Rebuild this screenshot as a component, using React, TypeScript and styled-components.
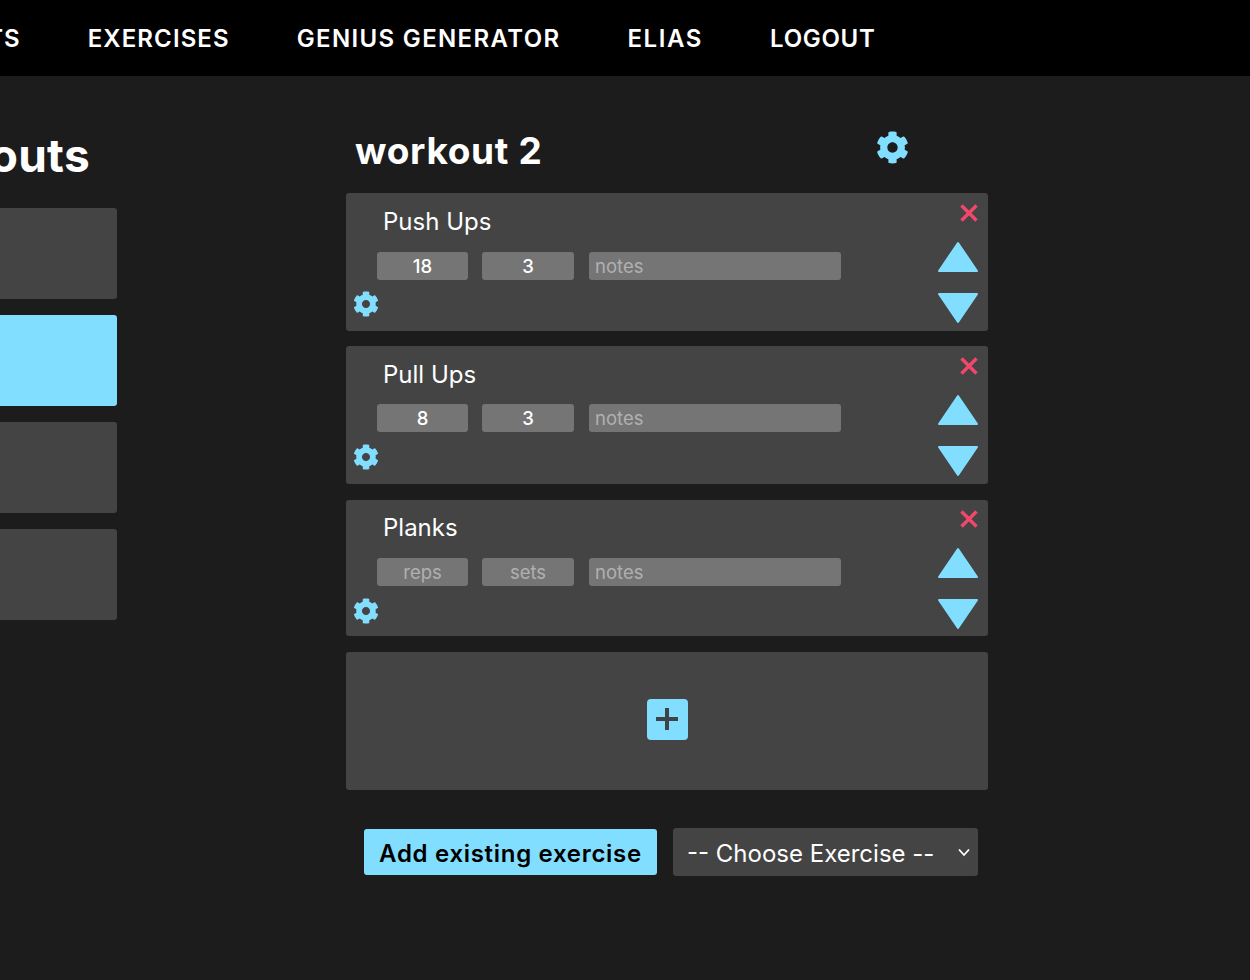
import { createGlobalStyle, styled } from "styled-components";
import { FaCog } from "react-icons/fa";

const FONT = `Inter, "Noto Sans", "Liberation Sans", sans-serif`;
const BLUE = "#82deff";

const links = [
    { label: "WORKOUTS", tracking: 1 },
    { label: "EXERCISES", tracking: 1.1 },
    { label: "GENIUS GENERATOR", tracking: 1.35 },
    { label: "ELIAS", tracking: 1.6 },
    { label: "LOGOUT", tracking: 0.7 },
];

const exercises = [
    { name: "Push Ups", reps: "18", sets: "3" },
    { name: "Pull Ups", reps: "8", sets: "3" },
    { name: "Planks", reps: "", sets: "" },
];

export default function App() {
    return (
        <>
            <GlobalStyle />
            <Nav>
                {links.map(link => (
                    <NavLink key={link.label} tracking={link.tracking}>{link.label}</NavLink>
                ))}
            </Nav>
            <Main>
                <WorkoutList>
                    <PageTitle>Workouts</PageTitle>
                    <WorkoutTile />
                    <WorkoutTile active />
                    <WorkoutTile />
                    <WorkoutTile />
                </WorkoutList>
                <Detail>
                    <DetailHead>
                        <DetailTitle>workout 2</DetailTitle>
                        <HeadGear><FaCog /></HeadGear>
                    </DetailHead>
                    <Cards>
                        {exercises.map(item => (
                            <Card key={item.name}>
                                <CardBody>
                                    <ExerciseName>{item.name}</ExerciseName>
                                    <Inputs>
                                        <SmallInput placeholder="reps" defaultValue={item.reps} />
                                        <SmallInput placeholder="sets" defaultValue={item.sets} />
                                        <NotesInput placeholder="notes" />
                                    </Inputs>
                                    <CardGear><FaCog /></CardGear>
                                </CardBody>
                                <CardControls>
                                    <DeleteIcon viewBox="0 0 18 18">
                                        <path d="M1.5 1.5 L16.5 16.5 M16.5 1.5 L1.5 16.5" />
                                    </DeleteIcon>
                                    <ArrowIcon viewBox="0 0 40 32">
                                        <path d="M20 2 L39 30 H1 Z" />
                                    </ArrowIcon>
                                    <ArrowIcon viewBox="0 0 40 32">
                                        <path d="M1 2 H39 L20 30 Z" />
                                    </ArrowIcon>
                                </CardControls>
                            </Card>
                        ))}
                        <AddCard>
                            <PlusButton>
                                <svg viewBox="0 0 24 24" width="24" height="24">
                                    <path d="M12 1 V23 M1 12 H23" stroke="#3d4347" strokeWidth="4" />
                                </svg>
                            </PlusButton>
                        </AddCard>
                    </Cards>
                    <AddRow>
                        <AddButton>Add existing exercise</AddButton>
                        <SelectWrap>
                            <ExerciseSelect>
                                <option>-- Choose Exercise --</option>
                            </ExerciseSelect>
                            <SelectChevron viewBox="0 0 12 9">
                                <path d="M1 1.5 L6 7 L11 1.5" />
                            </SelectChevron>
                        </SelectWrap>
                    </AddRow>
                </Detail>
            </Main>
        </>
    );
}

const GlobalStyle = createGlobalStyle`
    html, body {
        margin: 0;
        width: 1250px;
        height: 980px;
        overflow: hidden;
        background: #1c1c1c;
        font-family: ${FONT};
        color: #fff;
    }
    * { box-sizing: border-box; }
`;
const Nav = styled.nav`
    height: 76px;
    background: #000;
    display: flex;
    align-items: center;
    gap: 67px;
    margin-left: -129px;
    width: 1379px;
    padding-top: 1px;
`;
const NavLink = styled.a<{ tracking: number }>`
    font-size: 24px;
    font-weight: 600;
    letter-spacing: ${({ tracking }) => tracking}px;
    white-space: nowrap;
`;
const Main = styled.main`
    display: flex;
    margin-left: -213px;
`;
const WorkoutList = styled.section`
    width: 330px;
    margin-right: 229px;
    padding-top: 45px;
    display: flex;
    flex-direction: column;
    gap: 15.5px;
`;
const PageTitle = styled.h1`
    margin: 0 0 3px;
    height: 68px;
    font-size: 46px;
    line-height: 68px;
    font-weight: 700;
    letter-spacing: 0.3px;
    text-align: right;
    padding-right: 27px;
`;
const WorkoutTile = styled.div<{ active?: boolean }>`
    height: 91.5px;
    border-radius: 3px;
    background: ${({ active }) => (active ? BLUE : "#444")};
`;
const Detail = styled.section`
    width: 642px;
`;
const DetailHead = styled.div`
    height: 117px;
    display: flex;
    align-items: center;
    padding: 31px 0 0 9px;
`;
const DetailTitle = styled.h2`
    margin: 0;
    width: 521px;
    font-size: 37px;
    font-weight: 700;
    letter-spacing: 0.7px;
`;
const HeadGear = styled.span`
    font-size: 33px;
    color: ${BLUE};
    display: flex;
    margin-bottom: 6px;
`;
const Cards = styled.div`
    display: flex;
    flex-direction: column;
    gap: 16px;
`;
const Card = styled.article`
    height: 138px;
    background: #444;
    border-radius: 3px;
    display: flex;
    justify-content: space-between;
    padding: 11px 10px 0 7px;
    &:first-child { margin-bottom: -1px; }
    &:nth-child(3) { height: 136px; padding-top: 10px; }
`;
const CardBody = styled.div`
    display: flex;
    flex-direction: column;
`;
const ExerciseName = styled.h3`
    margin: 3px 0 0 30px;
    height: 30px;
    font-size: 24px;
    line-height: 30px;
    font-weight: 400;
`;
const Inputs = styled.div`
    display: flex;
    gap: 14px;
    margin: 14px 0 0 24px;
    ${Card}:nth-child(odd) & { margin-top: 15px; }
`;
const SmallInput = styled.input`
    width: 92px;
    height: 28px;
    border: 0;
    border-radius: 3px;
    background: #757575;
    color: #fff;
    font-family: ${FONT};
    font-size: 18.5px;
    font-weight: 500;
    text-align: center;
    padding: 0;
    &:first-child { width: 91px; }
    &::placeholder { color: #b0b0b0; font-weight: 400; }
`;
const NotesInput = styled(SmallInput)`
    width: 252px;
    margin-left: 1px;
    text-align: left;
    padding-left: 6px;
`;
const CardGear = styled.span`
    font-size: 26px;
    color: ${BLUE};
    display: flex;
    margin-top: 12px;
    ${Card}:first-child & { margin-top: 11px; }
`;
const CardControls = styled.div`
    display: flex;
    flex-direction: column;
    align-items: flex-end;
`;
const DeleteIcon = styled.svg`
    flex-shrink: 0;
    width: 18px;
    height: 18px;
    fill: none;
    stroke: #f0476b;
    stroke-width: 3.5;
    margin-bottom: 19px;
`;
const ArrowIcon = styled.svg`
    flex-shrink: 0;
    width: 40px;
    height: 32px;
    fill: ${BLUE};
    stroke: ${BLUE};
    stroke-width: 2;
    stroke-linejoin: round;
    margin-bottom: 19px;
`;
const AddCard = styled.div`
    height: 138px;
    background: #444;
    border-radius: 3px;
    display: flex;
    align-items: center;
    justify-content: center;
`;
const PlusButton = styled.button`
    width: 41px;
    height: 41px;
    border: 0;
    border-radius: 4px;
    background: ${BLUE};
    display: flex;
    align-items: center;
    justify-content: center;
    padding: 0;
    margin-bottom: 4px;
`;
const AddRow = styled.div`
    display: flex;
    align-items: center;
    gap: 16px;
    margin: 38px 0 0 18px;
`;
const AddButton = styled.button`
    width: 293px;
    height: 46px;
    border: 0;
    border-radius: 3px;
    background: ${BLUE};
    color: #000;
    font-family: ${FONT};
    font-size: 24px;
    font-weight: 600;
    letter-spacing: 0.7px;
    padding: 3px 0 0;
`;
const SelectWrap = styled.div`
    position: relative;
    display: flex;
`;
const ExerciseSelect = styled.select`
    appearance: none;
    width: 305px;
    height: 48px;
    border: 0;
    border-radius: 3px;
    background: #444;
    color: #fff;
    font-family: ${FONT};
    font-size: 24px;
    padding: 3px 14px 0;
`;
const SelectChevron = styled.svg`
    position: absolute;
    right: 8px;
    top: 20px;
    width: 12px;
    height: 9px;
    fill: none;
    stroke: #fff;
    stroke-width: 1.8;
    pointer-events: none;
`;
